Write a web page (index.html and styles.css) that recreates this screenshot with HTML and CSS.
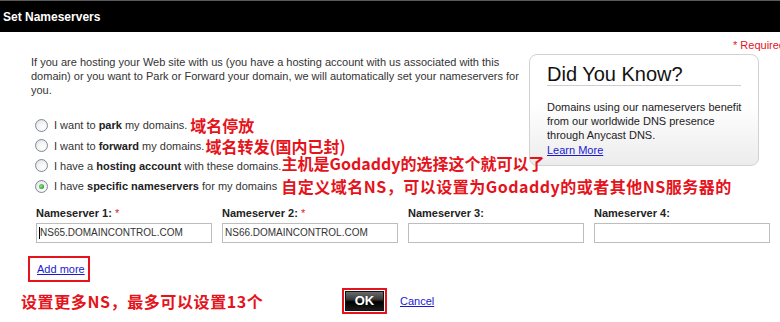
FILE: index.html
```html
<!DOCTYPE html>
<html lang="en">
<head>
<meta charset="utf-8">
<title>Set Nameservers</title>
<link rel="stylesheet" href="styles.css">
</head>
<body>
<div class="page">
  <div class="titlebar"><h1 class="title">Set Nameservers</h1></div>
  <div class="content">
    <div class="required">* Required</div>
    <div class="top">
      <div class="intro">
        <p class="desc">If you are hosting your Web site with us (you have a hosting account with us associated with this domain) or you want to Park or Forward your domain, we will automatically set your nameservers for you.</p>
        <ul class="options">
          <li class="option"><span class="radio"></span><span class="opt-text">I want to <b>park</b> my domains.</span><span class="note note-1">域名停放</span></li>
          <li class="option"><span class="radio"></span><span class="opt-text">I want to <b>forward</b> my domains.</span><span class="note note-2">域名转发(国内已封)</span></li>
          <li class="option"><span class="radio"></span><span class="opt-text">I have a <b>hosting account</b> with these domains.</span><span class="note note-3">主机是Godaddy的选择这个就可以了</span></li>
          <li class="option"><span class="radio checked"></span><span class="opt-text">I have <b>specific nameservers</b> for my domains</span><span class="note note-4">自定义域名NS，可以设置为Godaddy的或者其他NS服务器的</span></li>
        </ul>
      </div>
      <div class="dyk">
        <h2 class="dyk-title">Did You Know?</h2>
        <p class="dyk-text">Domains using our nameservers benefit<br>from our worldwide DNS presence<br>through Anycast DNS.</p>
        <a class="link" href="#">Learn More</a>
      </div>
    </div>
    <div class="ns-grid">
      <div class="ns-field">
        <label class="ns-label">Nameserver 1: <span class="star">*</span></label>
        <div class="ns-input"><span class="caret"></span>NS65.DOMAINCONTROL.COM</div>
      </div>
      <div class="ns-field">
        <label class="ns-label">Nameserver 2: <span class="star">*</span></label>
        <div class="ns-input">NS66.DOMAINCONTROL.COM</div>
      </div>
      <div class="ns-field">
        <label class="ns-label">Nameserver 3:</label>
        <div class="ns-input"></div>
      </div>
      <div class="ns-field">
        <label class="ns-label">Nameserver 4:</label>
        <div class="ns-input"></div>
      </div>
    </div>
    <div class="addmore-box"><a class="link" href="#">Add more</a></div>
    <div class="bottom">
      <span class="note note-5">设置更多NS，最多可以设置13个</span>
      <div class="ok-frame"><button class="ok-btn" type="button">OK</button></div>
      <a class="link cancel" href="#">Cancel</a>
    </div>
  </div>
</div>
</body>
</html>
```

FILE: styles.css
```css
html, body {
  margin: 0;
  padding: 0;
  background: #fff;
}
body {
  width: 780px;
  height: 322px;
  overflow: hidden;
  font-family: "Liberation Sans", Arial, sans-serif;
  font-size: 11px;
  color: #333;
}
.page {
  width: 780px;
  overflow: hidden;
}
.titlebar {
  height: 31px;
  background: #000;
  border-top: 1px solid #5a5a5a;
  display: flex;
  align-items: center;
  padding-left: 3px;
}
.title {
  margin: 0;
  color: #fff;
  font-size: 12px;
  font-weight: bold;
}
.required {
  color: #e0141e;
  text-align: right;
  margin-right: -5px;
  height: 17px;
  line-height: 14px;
  padding-top: 6px;
}
.top {
  display: flex;
  align-items: flex-start;
}
.intro {
  width: 498px;
  padding-left: 31px;
}
.desc {
  margin: 0;
  line-height: 14px;
  color: #333;
}
.options {
  list-style: none;
  margin: 18px 0 0 0;
  padding: 0 0 0 4px;
}
.option {
  display: flex;
  align-items: center;
  height: 20.4px;
  white-space: nowrap;
}
.radio {
  width: 11px;
  height: 11px;
  border-radius: 50%;
  border: 1px solid #7d8a99;
  background: radial-gradient(circle at 60% 65%, #ffffff 0%, #f2f2f2 50%, #d6d6d6 100%);
  flex: none;
  margin-right: 6px;
  display: flex;
  align-items: center;
  justify-content: center;
}
.radio.checked::after {
  content: "";
  width: 5px;
  height: 5px;
  border-radius: 50%;
  background: radial-gradient(circle at 40% 40%, #9be29b 0%, #2aa52a 70%, #1a7f1a 100%);
}
.opt-text {
  color: #333;
}
.opt-text b {
  color: #222;
}
.note {
  font-family: "Noto Sans CJK SC", "Noto Sans", sans-serif;
  font-size: 16px;
  font-weight: bold;
  color: #e5131b;
  line-height: 18px;
  white-space: nowrap;
}
.note-1 { margin-left: 3px; }
.note-2 { margin-left: 1px; }
.note-3 { margin-left: 0; position: relative; top: -3px; }
.note-4 { margin-left: 4px; letter-spacing: 0.5px; }
.dyk {
  flex: none;
  margin-top: -1px;
  width: 199px;
  height: 94px;
  border: 1px solid #d2d2d2;
  border-radius: 8px;
  background: linear-gradient(to bottom, #ffffff 0%, #ffffff 45%, #ececec 100%);
  padding: 8px 12px 8px 17px;
}
.dyk-title {
  margin: 0 5px 0 0;
  font-size: 20px;
  font-weight: normal;
  color: #111;
  line-height: 22px;
  padding-bottom: 0;
  border-bottom: 1px solid #cfcfcf;
}
.dyk-text {
  margin: 14px 0 0 0;
  line-height: 14px;
  color: #222;
  white-space: nowrap;
}
.link {
  color: #1a1ad0;
  text-decoration: underline;
}
.dyk .link {
  display: block;
  line-height: 14px;
  margin-top: 1px;
}
.ns-grid {
  display: grid;
  grid-template-columns: repeat(4, 176px);
  column-gap: 10px;
  padding-left: 36px;
  margin-top: 9px;
}
.ns-field {
  display: flex;
  flex-direction: column;
}
.ns-label {
  font-weight: bold;
  color: #222;
  line-height: 14px;
  height: 17px;
}
.star {
  color: #e0141e;
  font-weight: normal;
}
.ns-input {
  box-sizing: border-box;
  height: 20px;
  border: 1px solid #bdbdbd;
  background: #fff;
  font-size: 10px;
  color: #333;
  line-height: 18px;
  padding-left: 2px;
  display: flex;
  align-items: center;
  white-space: nowrap;
}
.caret {
  width: 1px;
  height: 12px;
  background: #000;
}
.addmore-box {
  margin: 13px 0 0 28px;
  width: 51px;
  height: 22px;
  border: 2px solid #e5131b;
  display: flex;
  align-items: center;
  padding-left: 7px;
}
.bottom {
  display: flex;
  align-items: center;
  margin-top: 6px;
  height: 26px;
}
.note-5 {
  margin-left: 21px;
  width: 321px;
  letter-spacing: 0.6px;
}
.ok-frame {
  width: 39px;
  height: 20px;
  border: 2px solid #e5131b;
  padding: 1px;
  display: flex;
}
.ok-btn {
  flex: 1;
  margin: 0;
  padding: 0;
  border: 1px solid #111;
  background: linear-gradient(to bottom, #6a6a6a 0%, #3a3a3a 40%, #000 55%, #1a1a1a 100%);
  color: #fff;
  font-family: "Liberation Sans", Arial, sans-serif;
  font-weight: bold;
  font-size: 13px;
  line-height: 16px;
}
.cancel {
  margin-left: 13px;
  margin-top: 1px;
}
```
